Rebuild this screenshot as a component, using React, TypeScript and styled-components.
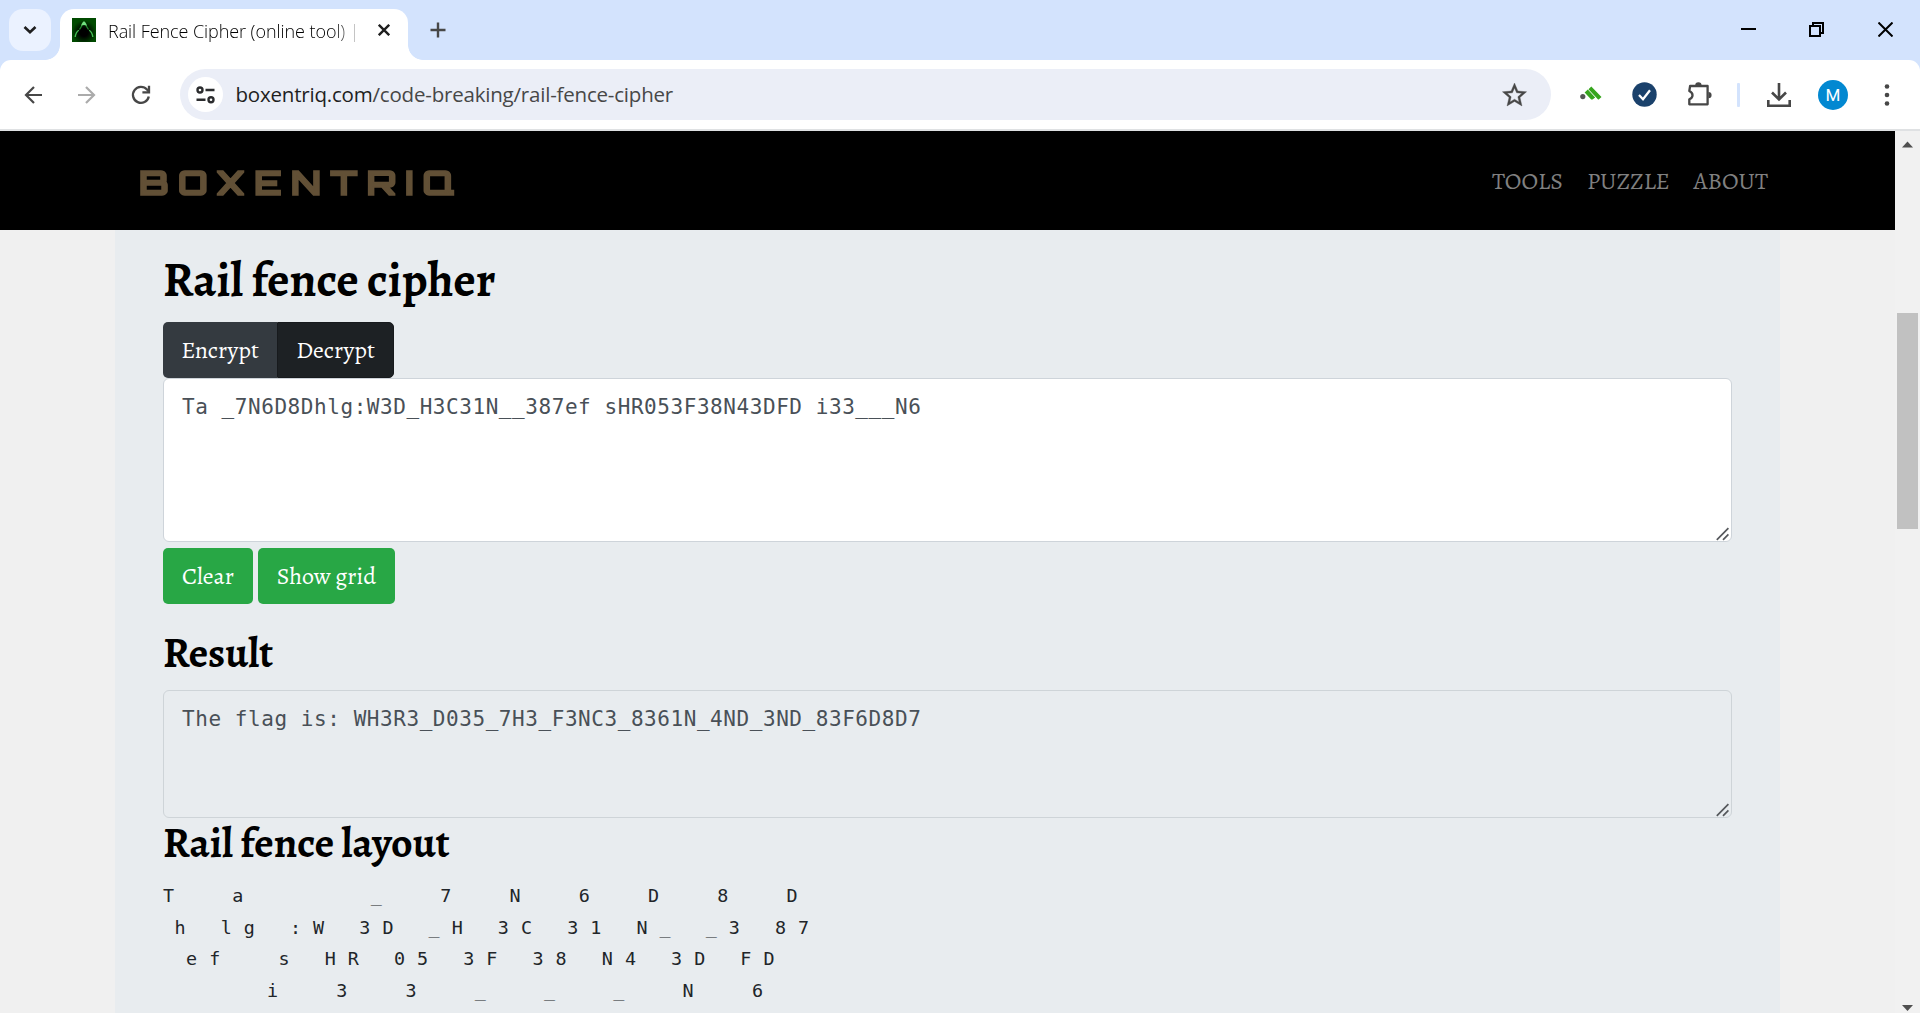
import React from 'react';
import styled, { createGlobalStyle, css } from 'styled-components';

const serif = `Alegreya, "Liberation Serif", serif`;
const sans = `"Segoe UI", "Open Sans", "Noto Sans", sans-serif`;
const mono = `Consolas, "DejaVu Sans Mono", monospace`;

const GlobalStyle = createGlobalStyle`
  *, *::before, *::after { box-sizing: border-box; }
  html, body { margin: 0; padding: 0; overflow: hidden; }
  h1, h2, h3, p, pre { margin: 0; }
  button { border: 0; background: none; padding: 0; font: inherit; color: inherit; }
`;

const Window = styled.div`
  display: flex;
  flex-direction: column;
  width: 1920px;
  height: 1013px;
  overflow: hidden;
  background: #d3e3fd;
`;

/* ---------- Tab strip ---------- */

const TabStrip = styled.header`
  display: flex;
  height: 60px;
  flex: none;
  padding: 9px 0 0 9px;
`;

const TabSearch = styled.button`
  display: flex;
  align-items: center;
  justify-content: center;
  width: 42px;
  height: 42px;
  border-radius: 14px;
  background: #ebf2ff;
`;

const Tab = styled.div`
  position: relative;
  display: flex;
  align-items: center;
  width: 348px;
  height: 51px;
  margin-left: 9px;
  padding: 0 18px 9px 12px;
  border-radius: 14px 14px 0 0;
  background: #fff;

  &::before,
  &::after {
    content: '';
    position: absolute;
    bottom: 0;
    width: 15px;
    height: 15px;
  }
  &::before {
    left: -15px;
    background: radial-gradient(circle at 0 0, transparent 14.5px, #fff 15.2px);
  }
  &::after {
    right: -15px;
    background: radial-gradient(circle at 100% 0, transparent 14.5px, #fff 15.2px);
  }
`;

const TabTitle = styled.span`
  flex: 1;
  margin: 2px 18px 0 12px;
  overflow: hidden;
  white-space: nowrap;
  font: 300 18px/26px ${sans};
  letter-spacing: -0.07px;
  color: #000;
  mask-image: linear-gradient(90deg, #000 225px, transparent 256px);
`;

const NewTab = styled.button`
  display: flex;
  align-items: center;
  justify-content: center;
  width: 42px;
  height: 42px;
  margin-left: 9px;
`;

const WindowControls = styled.div`
  display: flex;
  margin: -9px 0 0 auto;
  height: 60px;
`;

const WindowButton = styled.button`
  display: flex;
  align-items: center;
  justify-content: center;
  width: 69px;
  height: 59px;
`;

/* ---------- Toolbar ---------- */

const Toolbar = styled.div`
  display: flex;
  align-items: center;
  height: 71px;
  flex: none;
  border-bottom: 2px solid #dfe1e3;
  border-radius: 11px 11px 0 0;
  background: #fff;
`;

const ToolButton = styled.button<{ $width: number; $before?: number }>`
  display: flex;
  flex: none;
  align-items: center;
  justify-content: center;
  width: ${(p) => p.$width}px;
  height: 48px;
  margin-left: ${(p) => p.$before ?? 0}px;
`;

const Omnibox = styled.div`
  display: flex;
  flex: none;
  align-items: center;
  width: 1371px;
  height: 51px;
  margin-left: 5px;
  padding: 0 22px 0 8px;
  border-radius: 26px;
  background: #ebeef7;
`;

const SiteChip = styled.span`
  display: flex;
  align-items: center;
  justify-content: center;
  width: 35px;
  height: 35px;
  border-radius: 50%;
  background: #fff;
`;

const Url = styled.span`
  flex: 1;
  margin: -2px 0 0 12.5px;
  font: 400 20.5px/30px ${sans};
  letter-spacing: -0.2px;
  color: #474747;

  b {
    font-weight: 400;
    color: #1f1f1f;
  }
`;

const ToolDivider = styled.i`
  width: 3px;
  height: 24px;
  margin: 0 13px;
  border-radius: 1px;
  background: #d3e3fd;
`;

const Avatar = styled.span`
  display: flex;
  align-items: center;
  justify-content: center;
  width: 30px;
  height: 30px;
  border-radius: 50%;
  background: #0288d1;
  font: 400 17px/30px Roboto, sans-serif;
  color: #fff;
`;

/* ---------- Page ---------- */

const Viewport = styled.div`
  display: flex;
  flex: 1;
  min-height: 0;
  background: #f0f0f0;
`;

const Page = styled.div`
  flex: 1;
  min-width: 0;
  overflow: hidden;
`;

const SiteNav = styled.nav`
  display: flex;
  align-items: center;
  justify-content: space-between;
  height: 99px;
  padding: 0 127px 0 139px;
  background: #000;
`;

const Brand = styled.a`
  margin-top: 4px;
  font: 700 32px/40px Orbitron, "DejaVu Sans", sans-serif;
  letter-spacing: 8.3px;
  color: #625036;
  transform: scaleX(1.12);
  transform-origin: 0 50%;
  -webkit-text-stroke: 1.6px #625036;
`;

const NavLinks = styled.div`
  display: flex;
  gap: 24px;
  margin-top: 1px;
  font: 400 24px/36px ${serif};
  color: #808080;
`;

const Container = styled.main`
  width: 1665px;
  height: 783px;
  margin-left: 115px;
  padding: 20px 48px 0;
  background: #e8ecef;
`;

const Title = styled.h1`
  height: 72px;
  font: 700 48px/60px ${serif};
  color: #000;
`;

const Subtitle = styled.h2<{ $top: number; $height: number }>`
  height: ${(p) => p.$height}px;
  padding-top: ${(p) => p.$top}px;
  font: 700 42px/50px ${serif};
  color: #000;
`;

const ButtonRow = styled.div<{ $gap: number }>`
  display: flex;
  gap: ${(p) => p.$gap}px;
`;

const tones = {
  dark: css`
    background: #343a40;
    border-radius: 5px 0 0 5px;
  `,
  active: css`
    background: #1d2124;
    border: 1px solid #171a1d;
    border-radius: 0 5px 5px 0;
  `,
  green: css`
    background: #28a745;
    border-radius: 5px;
  `,
};

const Button = styled.button<{ $tone: keyof typeof tones; $width: number }>`
  width: ${(p) => p.$width}px;
  height: 56px;
  font: 400 24px/54px ${serif};
  color: #fff;
  ${(p) => tones[p.$tone]}
`;

const Field = styled.div<{ $height: number; $readOnly?: boolean }>`
  position: relative;
  width: 1569px;
  height: ${(p) => p.$height}px;
  padding: 10px 18px;
  border: 1px solid ${(p) => (p.$readOnly ? '#ced4d8' : '#ced4da')};
  border-radius: 6px;
  background: ${(p) => (p.$readOnly ? '#e8ecef' : '#fff')};
  font: 400 21px/36px ${mono};
  letter-spacing: 0.56px;
  color: #495057;
  white-space: pre;
`;

const GripIcon = styled.svg`
  position: absolute;
  right: 1px;
  bottom: 0;
`;

const Actions = styled.div`
  padding-top: 6px;
`;

const Layout = styled.pre`
  font: 400 18.4px/31.5px ${mono};
  letter-spacing: 0.475px;
  color: #212529;
`;

/* ---------- Scrollbar ---------- */

const Scrollbar = styled.aside`
  display: flex;
  flex-direction: column;
  align-items: center;
  width: 25px;
  background: #f1f1f1;
`;

const Track = styled.div`
  flex: 1;
  padding-top: 157px;
`;

const Thumb = styled.div`
  width: 21px;
  height: 216px;
  background: #c1c1c1;
`;

const ScrollArrow = styled.svg`
  flex: none;
`;

const Grip = () => (
  <GripIcon width="14" height="14" viewBox="0 0 14 14" fill="none" stroke="#55585c" strokeWidth="1.7">
    <path d="M.8 12.8 12.4 1.2M7 12.8 12.4 7.4" />
  </GripIcon>
);

const plain = 'The flag is: WH3R3_D035_7H3_F3NC3_8361N_4ND_3ND_83F6D8D7';
const cipher = 'Ta _7N6D8Dhlg:W3D_H3C31N__387ef sHR053F38N43DFD i33___N6';

/** Writes each character on the rail it falls on, going down and up. */
function railRows(text: string, rails: number): string {
  const period = 2 * (rails - 1);
  return Array.from({ length: rails }, (_, rail) =>
    [...text]
      .map((ch, i) => {
        const step = i % period;
        return Math.min(step, period - step) === rail ? ch : ' ';
      })
      .join(''),
  ).join('\n');
}

const ink = '#474747';

export default function App() {
  return (
    <Window>
      <GlobalStyle />
      <TabStrip>
        <TabSearch aria-label="Search tabs">
          <svg width="14" height="10" viewBox="0 0 14 10" fill="none" stroke="#1f1f1f" strokeWidth="2.6">
            <path d="m1.5 2 5.5 5.3L12.5 2" />
          </svg>
        </TabSearch>
        <Tab>
          <svg width="24" height="24" viewBox="0 0 24 24">
            <defs>
              <radialGradient id="fav" cx=".5" cy=".6" r=".56">
                <stop offset=".3" stopColor="#000" />
                <stop offset=".9" stopColor="#004a00" />
              </radialGradient>
            </defs>
            <rect width="24" height="24" fill="url(#fav)" />
            <path
              d="M3.2 19c.4-3.4 1.6-5.6 3.6-6.8M20.8 19c-.4-3.4-1.6-5.6-3.6-6.8"
              fill="none"
              stroke="#44c455"
              strokeWidth="1.3"
            />
            <path d="M7.5 11.5 10 7.5M16.5 11.5 14 7.5" stroke="#1f8a2c" strokeWidth="1.3" />
            <path d="M12 3.2c1.5 1 2.6 2.600 3 4.600L12 6.900 9 7.800c.4-2 1.500-3.600 3-4.600z" fill="#72e27f" />
          </svg>
          <TabTitle>Rail Fence Cipher (online tool) |</TabTitle>
          <svg width="12" height="12" viewBox="0 0 12 12" stroke="#1f1f1f" strokeWidth="2.4">
            <path d="m.8.8 10.4 10.4M11.2.8.8 11.2" />
          </svg>
        </Tab>
        <NewTab aria-label="New tab">
          <svg width="16" height="16" viewBox="0 0 16 16" stroke={ink} strokeWidth="2.4">
            <path d="M8 .5v15M.5 8h15" />
          </svg>
        </NewTab>
        <WindowControls>
          <WindowButton aria-label="Minimize">
            <svg width="17" height="15" shapeRendering="crispEdges">
              <rect x="2" y="6" width="15" height="2" />
            </svg>
          </WindowButton>
          <WindowButton aria-label="Restore">
            <svg
              width="15"
              height="15"
              viewBox="0 0 15 15"
              fill="none"
              stroke="#000"
              strokeWidth="2"
              shapeRendering="crispEdges"
            >
              <path d="M1 4h10v10H1zM4 4V1h10v10h-3" />
            </svg>
          </WindowButton>
          <WindowButton aria-label="Close">
            <svg width="15" height="15" viewBox="0 0 15 15" stroke="#000" strokeWidth="2">
              <path d="m.5.5 14 14M14.5.5l-14 14" />
            </svg>
          </WindowButton>
        </WindowControls>
      </TabStrip>

      <Toolbar>
        <ToolButton $width={66} aria-label="Back">
          <svg width="18" height="18" viewBox="0 0 18 18" fill="none" stroke={ink} strokeWidth="2.2">
            <path d="M18 9H2M10 1 2 9l8 8" />
          </svg>
        </ToolButton>
        <ToolButton $width={41} aria-label="Forward">
          <svg width="18" height="18" viewBox="0 0 18 18" fill="none" stroke="#ababab" strokeWidth="2.2">
            <path d="M0 9h16M8 1l8 8-8 8" />
          </svg>
        </ToolButton>
        <ToolButton $width={68} aria-label="Reload">
          <svg width="20" height="20" viewBox="0 0 20 20" fill="none" stroke={ink} strokeWidth="2.3">
            <path d="M17.8 11.5A8 8 0 1 1 16 4.6L18 6.8" />
            <path d="M18 .8v6.6h-6.6" />
          </svg>
        </ToolButton>
        <Omnibox>
          <SiteChip>
            <svg width="20" height="18" viewBox="0 0 20 18" fill="none" stroke="#2b2c2e" strokeWidth="2.4">
              <circle cx="4" cy="4" r="2.5" />
              <path d="M9.5 4H18.5M.5 13.8h9" />
              <circle cx="15" cy="13.8" r="2.5" />
            </svg>
          </SiteChip>
          <Url>
            <b>boxentriq.com</b>/code-breaking/rail-fence-cipher
          </Url>
          <svg width="29" height="29" viewBox="0 0 24 24" fill={ink} stroke={ink} strokeWidth=".3">
            <path d="M22 9.74l-7.19-.62L12 2.5 9.19 9.13 2 9.74l5.46 4.73L5.82 21.5 12 17.77l6.18 3.73-1.63-7.03zM12 15.9l-3.76 2.27 1-4.28-3.32-2.88 4.38-.38L12 6.6l1.71 4.04 4.38.38-3.32 2.88 1 4.28z" />
          </svg>
        </Omnibox>
        <ToolButton $width={79} aria-label="Extension">
          <svg width="22" height="17" viewBox="0 0 22 17">
            <circle cx="2.8" cy="10.6" r="2.6" fill="#555" />
            <path d="M4.6 6.6 7.8 3.6l7.4 7.8-2.7 2.2h-1.300zM8.500 3.200 11.300.5l10.200 10.500-2.800 2.600h-.6z" fill="#36a51d" />
          </svg>
        </ToolButton>
        <ToolButton $width={29} aria-label="Verified">
          <svg width="25" height="25" viewBox="0 0 25 25">
            <circle cx="12.5" cy="12.5" r="12.2" fill="#1a416b" />
            <path d="m7 13 4 4.2 7-9" fill="none" stroke="#fff" strokeWidth="2.3" />
          </svg>
        </ToolButton>
        <ToolButton $width={48} $before={17} aria-label="Extensions">
          <svg width="26" height="26" viewBox="0 0 26 26">
            <path
              d="M3.1 4H20.6V22.3H2.3V17.2C6.6 15.4 6.6 11 2.3 9z"
              fill="none"
              stroke={ink}
              strokeWidth="2.3"
              strokeLinejoin="round"
            />
            <path d="M8.2 3.4a3.2 3.2 0 0 1 6.4 0zM21.4 9.9a3.2 3.2 0 0 1 0 6.4z" fill={ink} />
          </svg>
        </ToolButton>
        <ToolDivider />
        <ToolButton $width={52} aria-label="Downloads">
          <svg width="24" height="24" viewBox="0 0 24 24" fill="none" stroke={ink} strokeWidth="2.6">
            <path d="M12 0v16M5 9.5l7 7 7-7M1.3 17v5.7h21.4V17" />
          </svg>
        </ToolButton>
        <ToolButton $width={56} aria-label="Profile">
          <Avatar>M</Avatar>
        </ToolButton>
        <ToolButton $width={52} aria-label="Menu">
          <svg width="6" height="24" viewBox="0 0 6 24" fill={ink}>
            <circle cx="3" cy="3.5" r="2.3" />
            <circle cx="3" cy="12" r="2.3" />
            <circle cx="3" cy="20.5" r="2.3" />
          </svg>
        </ToolButton>
      </Toolbar>

      <Viewport>
        <Page>
          <SiteNav>
            <Brand>BOXENTRIQ</Brand>
            <NavLinks>
              <span>TOOLS</span>
              <span>PUZZLE</span>
              <span>ABOUT</span>
            </NavLinks>
          </SiteNav>
          <Container>
            <Title>Rail fence cipher</Title>
            <ButtonRow $gap={0}>
              <Button $tone="dark" $width={114}>Encrypt</Button>
              <Button $tone="active" $width={117}>Decrypt</Button>
            </ButtonRow>
            <Field $height={164}>
              {cipher}
              <Grip />
            </Field>
            <Actions>
              <ButtonRow $gap={5}>
                <Button $tone="green" $width={90}>Clear</Button>
                <Button $tone="green" $width={137}>Show grid</Button>
              </ButtonRow>
            </Actions>
            <Subtitle $top={24} $height={86}>Result</Subtitle>
            <Field $height={128} $readOnly>
              {plain}
              <Grip />
            </Field>
            <Subtitle $top={0} $height={62}>Rail fence layout</Subtitle>
            <Layout>{railRows(plain, 4)}</Layout>
          </Container>
        </Page>
        <Scrollbar>
          <ScrollArrow width="25" height="25" viewBox="0 0 25 25">
            <path d="M7 16.5 12.5 10.5 18 16.5z" fill="#505050" />
          </ScrollArrow>
          <Track>
            <Thumb />
          </Track>
          <ScrollArrow width="25" height="25" viewBox="0 0 25 25">
            <path d="M7 17 12.5 23 18 17z" fill="#505050" />
          </ScrollArrow>
        </Scrollbar>
      </Viewport>
    </Window>
  );
}
